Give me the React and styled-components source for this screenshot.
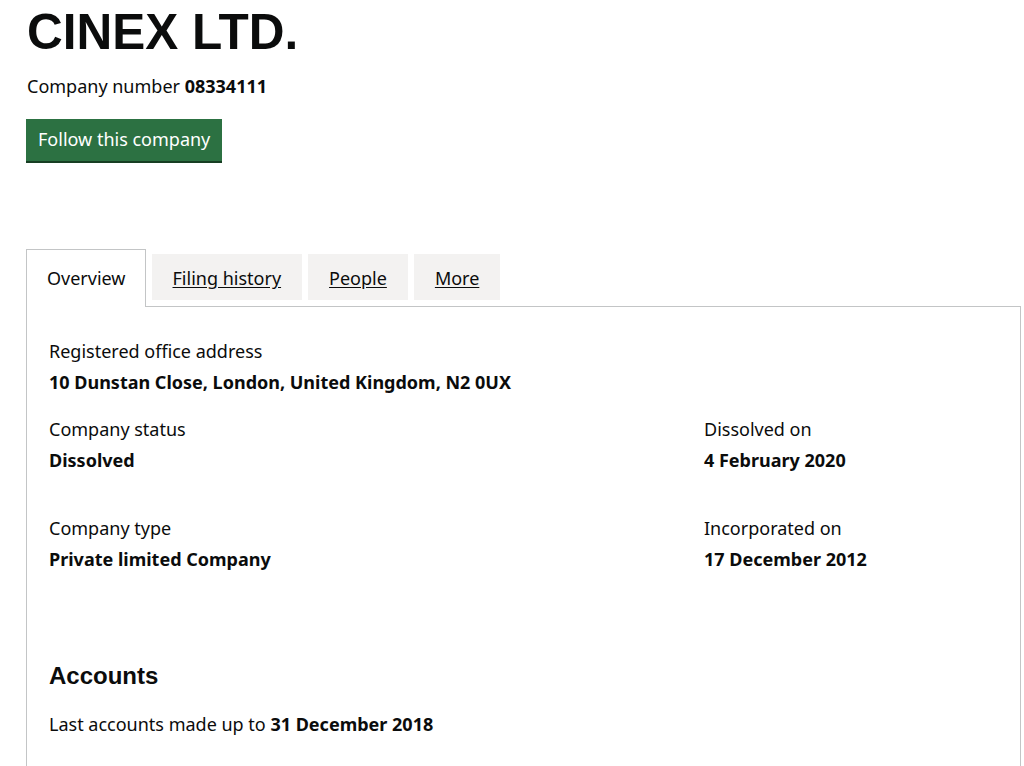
import styled, { createGlobalStyle } from "styled-components";

const GlobalStyle = createGlobalStyle`
  body {
    margin: 0;
    background: #fff;
    color: #0b0c0c;
    font-family: "Noto Sans", "Liberation Sans", sans-serif;
  }
`;

const Page = styled.main`
  padding: 0 3px 0 26px;
`;

const Title = styled.h1`
  font-family: "Liberation Sans", Arial, sans-serif;
  font-size: 49.5px;
  line-height: 49px;
  font-weight: 700;
  margin: 7px 0 0 1px;
`;

const Meta = styled.p`
  font-size: 18px;
  line-height: 25px;
  margin: 18px 0 0 1px;
`;

const FollowButton = styled.button`
  display: block;
  margin-top: 20px;
  background: #2c7142;
  color: #fff;
  border: 0;
  box-shadow: 0 2px 0 #173e23;
  font-family: inherit;
  font-size: 18px;
  line-height: 25px;
  padding: 8px 12px 9px 12px;
  cursor: pointer;
`;

const TabList = styled.ul`
  list-style: none;
  display: flex;
  align-items: flex-start;
  gap: 6px;
  margin: 88px 0 0;
  padding: 0;
`;

const Tab = styled.li`
  font-size: 18px;
  line-height: 25px;
  padding: ${(p) => (p.active ? "16px 19px 16px 20px" : "12px 21px 9px")};
  margin-top: ${(p) => (p.active ? "0" : "5px")};
  margin-bottom: ${(p) => (p.active ? "-1px" : "0")};
  background: ${(p) => (p.active ? "#fff" : "#f3f2f1")};
  border: ${(p) => (p.active ? "1px solid #c3c5c6" : "0")};
  border-bottom: 0;
  position: relative;

  a {
    color: #0b0c0c;
    text-decoration: underline;
    text-underline-offset: 2px;
  }
`;

const Panel = styled.section`
  border: 1px solid #c3c5c6;
  border-bottom: 0;
  padding: 32px 22px 40px;
  min-height: 500px;
`;

const Grid = styled.div`
  display: grid;
  grid-template-columns: 655px 1fr;
  row-gap: ${(p) => p.gap || 0}px;
  margin-bottom: ${(p) => p.after || 0}px;
`;

const Field = styled.dl`
  margin: 0;
  font-size: 18px;
  line-height: 25px;
`;

const Label = styled.dt`
  margin: 0 0 6px;
`;

const Value = styled.dd`
  margin: 0;
  font-weight: 700;
`;

const SectionTitle = styled.h2`
  font-family: "Liberation Sans", Arial, sans-serif;
  font-size: 24px;
  line-height: 30px;
  font-weight: 700;
  margin: 0 0 21px;
`;

const Text = styled.p`
  font-size: 18px;
  line-height: 25px;
  margin: 0;

  strong {
    font-weight: 700;
  }
`;

function Item({ label, value }) {
  return (
    <Field>
      <Label>{label}</Label>
      <Value>{value}</Value>
    </Field>
  );
}

export default function App() {
  return (
    <Page>
      <GlobalStyle />
      <Title>CINEX LTD.</Title>
      <Meta>
        Company number <strong>08334111</strong>
      </Meta>
      <FollowButton>Follow this company</FollowButton>

      <TabList>
        <Tab active>Overview</Tab>
        <Tab>
          <a href="#filing">Filing history</a>
        </Tab>
        <Tab>
          <a href="#people">People</a>
        </Tab>
        <Tab>
          <a href="#more">More</a>
        </Tab>
      </TabList>

      <Panel>
        <Grid after={22}>
          <Item
            label="Registered office address"
            value="10 Dunstan Close, London, United Kingdom, N2 0UX"
          />
        </Grid>
        <Grid gap={43} after={89}>
          <Item label="Company status" value="Dissolved" />
          <Item label="Dissolved on" value="4 February 2020" />
          <Item label="Company type" value="Private limited Company" />
          <Item label="Incorporated on" value="17 December 2012" />
        </Grid>
        <SectionTitle>Accounts</SectionTitle>
        <Text>
          Last accounts made up to <strong>31 December 2018</strong>
        </Text>
      </Panel>
    </Page>
  );
}
